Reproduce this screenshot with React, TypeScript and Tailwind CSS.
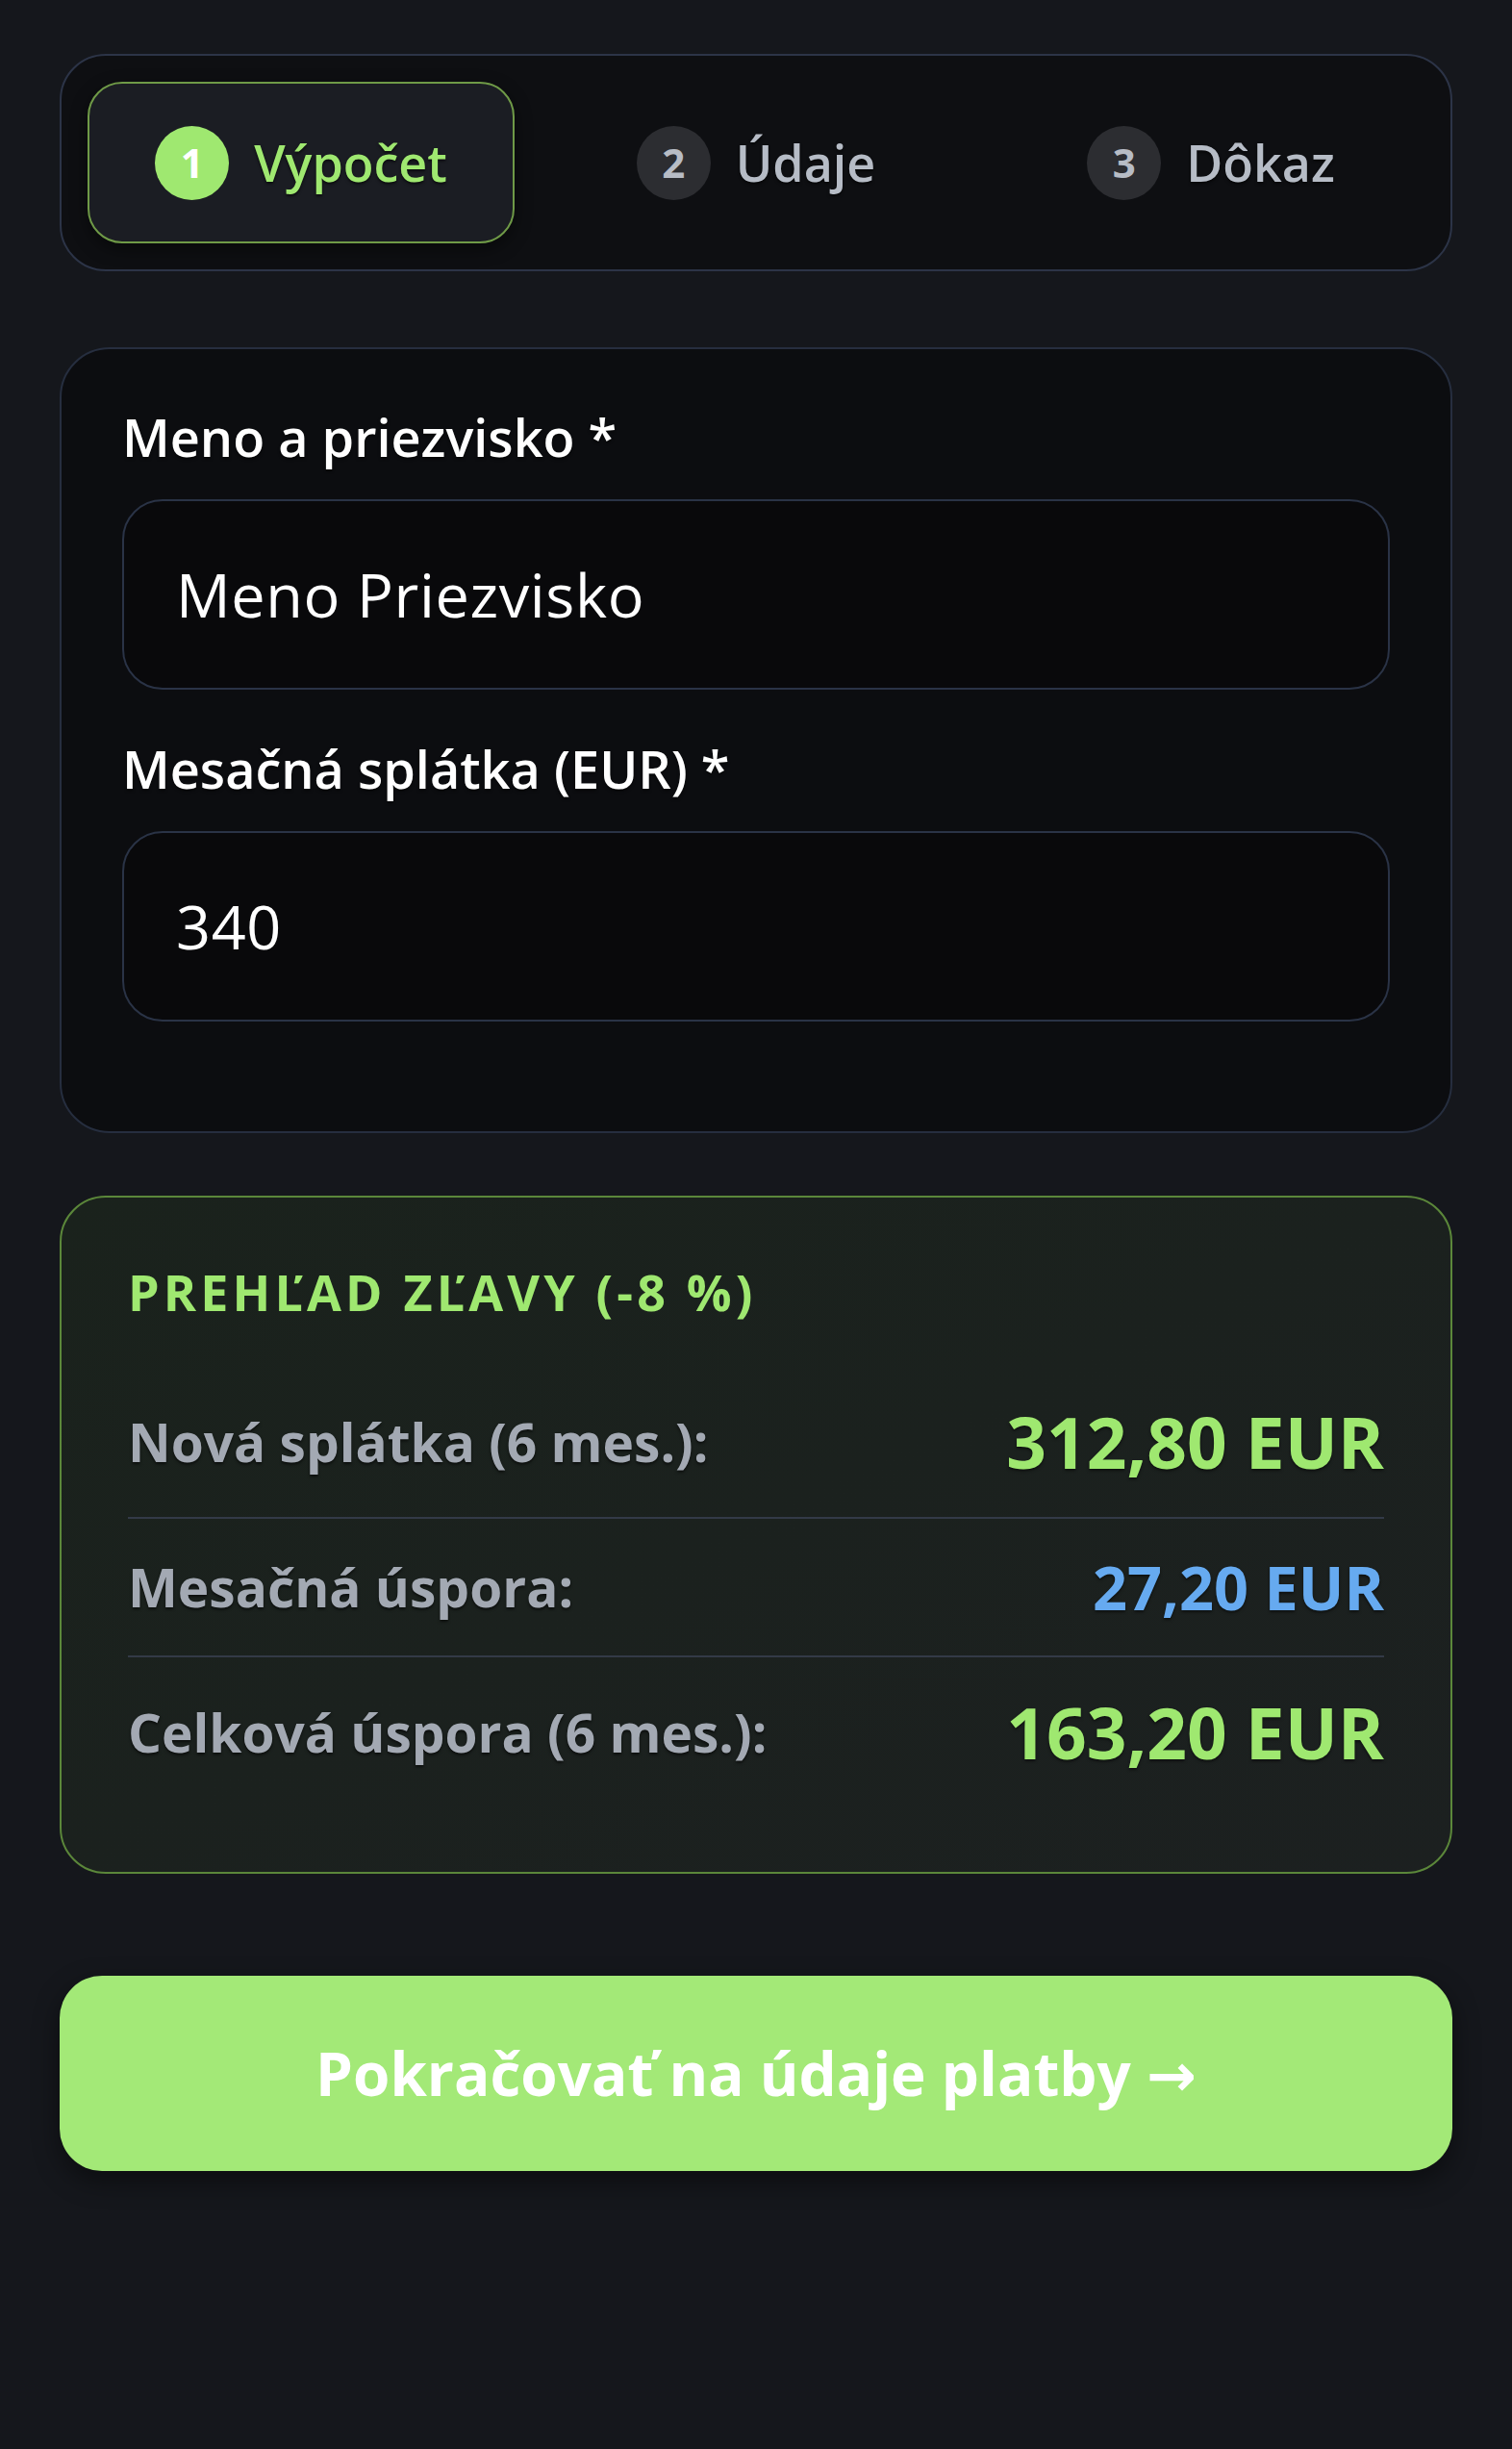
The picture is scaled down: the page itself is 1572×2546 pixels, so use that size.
import React from 'react';

const STEPS = [
  { n: 1, label: 'Výpočet', active: true },
  { n: 2, label: 'Údaje', active: false },
  { n: 3, label: 'Dôkaz', active: false },
];

const StepTab: React.FC<{ n: number; label: string; active: boolean }> = ({ n, label, active }) => (
  <div
    className={`h-[168px] flex items-center justify-center gap-[26px] rounded-[36px] ${
      active ? 'border-2 border-[#6f9a47] bg-[#1b1d23] shadow-[0_6px_18px_rgba(0,0,0,0.45)]' : ''
    }`}
  >
    <div
      className={`w-[77px] h-[77px] rounded-full flex items-center justify-center text-[42px] font-bold leading-none ${
        active ? 'bg-[#9fe870] text-white' : 'bg-[#2c2d31] text-[#b7bcc5]'
      }`}
    >
      {n}
    </div>
    <span
      className={`text-[52px] font-semibold leading-none [text-shadow:0_2px_3px_rgba(0,0,0,0.6)] ${
        active ? 'text-[#9fe870]' : 'text-[#b6bcc6]'
      }`}
    >
      {label}
    </span>
  </div>
);

const Field: React.FC<{ label: string; value: string; className?: string }> = ({ label, value, className }) => (
  <div className={className}>
    <div className="text-[54px] leading-[65px] font-semibold text-white [text-shadow:0_2px_3px_rgba(0,0,0,0.6)]">
      {label}
    </div>
    <div className="mt-[32px] h-[198px] rounded-[42px] border-2 border-[#2a3346] bg-[#09090b] px-[54px] flex items-center text-[63px] tracking-[0.01em] text-white">
      {value}
    </div>
  </div>
);

const Row: React.FC<{ label: string; value: string; valueClass: string; divider?: boolean }> = ({
  label,
  value,
  valueClass,
  divider,
}) => (
  <div className={`flex items-center justify-between py-[35px] ${divider ? 'border-b-2 border-[#333a47]' : ''}`}>
    <span className="text-[55px] leading-[72px] font-bold text-[#a3a9b3] [text-shadow:0_2px_3px_rgba(0,0,0,0.6)]">
      {label}
    </span>
    <span className={`font-bold [text-shadow:0_2px_3px_rgba(0,0,0,0.5)] ${valueClass}`}>{value}</span>
  </div>
);

export default function App() {
  return (
    <div className="min-h-screen w-full bg-[#15171c] px-[62px] pt-[56px] pb-[290px] font-['Open_Sans','DejaVu_Sans',sans-serif]">
      {/* Steps */}
      <div className="rounded-[48px] border-2 border-[#2c3447] bg-[#0e0f12] p-[27px] grid grid-cols-3 gap-[29px]">
        {STEPS.map(s => (
          <StepTab key={s.n} {...s} />
        ))}
      </div>

      {/* Form */}
      <div className="mt-[79px] rounded-[52px] border-2 border-[#262e3f] bg-[#0c0d10] px-[63px] pt-[59px] pb-[114px]">
        <Field label="Meno a priezvisko *" value="Meno Priezvisko" />
        <Field label="Mesačná splátka (EUR) *" value="340" className="mt-[50px]" />
      </div>

      {/* Discount summary */}
      <div className="mt-[65px] rounded-[48px] border-2 border-[#5b873a] bg-gradient-to-br from-[#1a221c] to-[#1c2020] px-[69px] pt-[67px] pb-[67px]">
        <div className="text-[52px] leading-[62px] font-bold tracking-[0.08em] text-[#9fe870]">
          PREHĽAD ZĽAVY (-8 %)
        </div>
        <div className="mt-[47px]">
          <Row
            label="Nová splátka (6 mes.):"
            value="312,80 EUR"
            valueClass="text-[73px] leading-[86px] text-[#9fe870]"
            divider
          />
          <Row
            label="Mesačná úspora:"
            value="27,20 EUR"
            valueClass="text-[63px] leading-[72px] text-[#66aaf0]"
            divider
          />
          <Row
            label="Celková úspora (6 mes.):"
            value="163,20 EUR"
            valueClass="text-[73px] leading-[86px] text-[#9fe870]"
          />
        </div>
      </div>

      {/* CTA */}
      <button className="mt-[106px] w-full h-[203px] rounded-[44px] bg-[#a3e977] flex items-center justify-center text-[62px] font-bold text-white shadow-[0_10px_28px_rgba(0,0,0,0.45)]">
        Pokračovať na údaje platby →
      </button>
    </div>
  );
}
